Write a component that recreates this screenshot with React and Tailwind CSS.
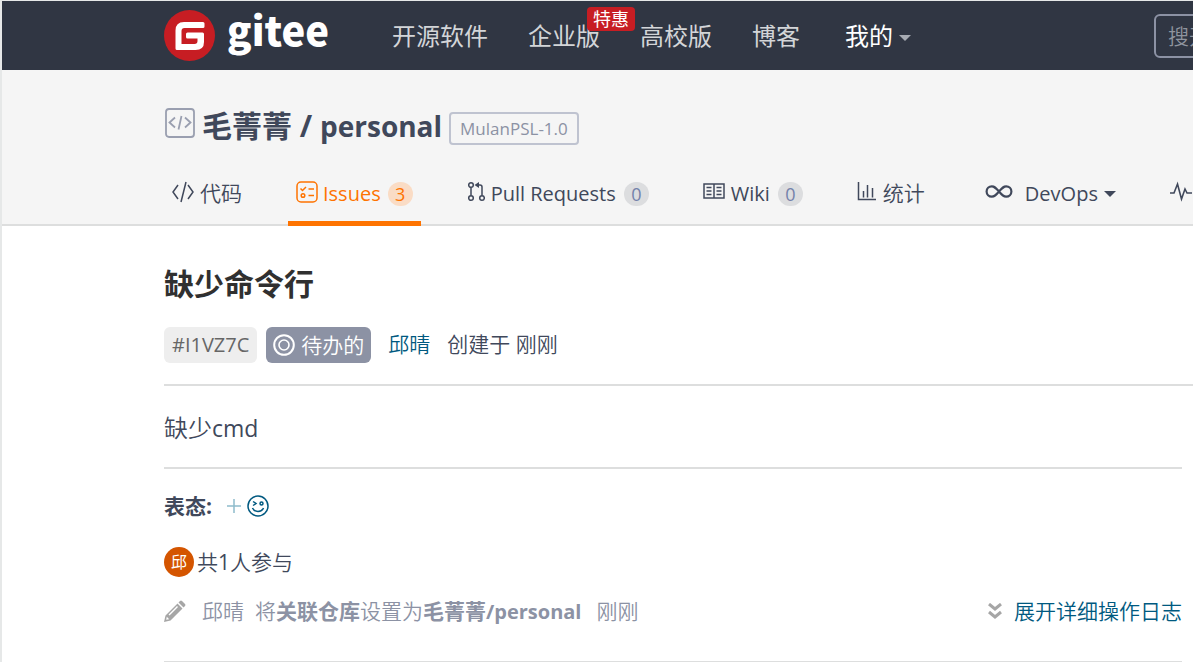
import React from "react";

const CodeIcon = () => (
  <svg className="h-[22px] w-[22px]" viewBox="0 0 22 22" fill="none" stroke="currentColor" strokeWidth="1.5">
    <path d="M6 4L1 11l5 7M16 4l5 7-5 7M14 1L9 21" />
  </svg>
);

const IssueIcon = () => (
  <svg className="h-[22px] w-[22px]" viewBox="0 0 22 22" fill="none" stroke="currentColor" strokeWidth="1.5">
    <rect x="1" y="1" width="20" height="20" rx="4" />
    <path d="M4.5 7.5l2 2 3.5-3.5M12.5 8H18M12.5 14.500H18" />
    <circle cx="7" cy="14.500" r="1.800" />
  </svg>
);

const PullIcon = () => (
  <svg className="h-[22px] w-[18px]" viewBox="0 0 18 22" fill="none" stroke="currentColor" strokeWidth="1.5">
    <circle cx="4" cy="4" r="2.300" />
    <circle cx="4" cy="17" r="2.300" />
    <circle cx="15" cy="17" r="2.300" />
    <path d="M4 6.500v8M15 14.500V6q0-2-2-2H9" />
    <path d="M12 1v6L7.500 4z" fill="currentColor" stroke="none" />
  </svg>
);

const WikiIcon = () => (
  <svg className="h-[22px] w-[22px]" viewBox="0 0 22 22" fill="none" stroke="currentColor" strokeWidth="1.5">
    <path d="M1 3h20v14H1zM11 3v14" />
    <path d="M3.500 6.500h5M3.500 10h5M3.500 13.500h5M13.500 6.500h5M13.500 10h5M13.500 13.500h5" />
  </svg>
);

const StatsIcon = () => (
  <svg className="h-[22px] w-5" viewBox="0 0 20 22" fill="none" stroke="currentColor" strokeWidth="1.5">
    <path d="M1.500 1v17.500H19M6.500 10v6.500M10.500 4v12.500M15.500 7v9.500" />
  </svg>
);

const DevOpsIcon = () => (
  <svg className="mr-[6px] ml-[6px] h-[22px] w-7" viewBox="0 0 28 22" fill="none" stroke="currentColor" strokeWidth="2.2">
    <path d="M14 10.500C10.500 6.500 9.500 5.300 6.800 5.300a5.200 5.200 0 0 0 0 10.400C9.500 15.700 10.500 14.500 14 10.500s4.500-5.200 7.200-5.200a5.200 5.200 0 0 1 0 10.400c-2.700 0-3.700-1.200-7.200-5.200z" />
  </svg>
);

const PulseIcon = () => (
  <svg className="h-[22px] w-[22px]" viewBox="0 0 22 22" fill="none" stroke="currentColor" strokeWidth="1.6">
    <path d="M0 12h4L7.500 3l4 15L15 8l2 4h5" />
  </svg>
);

const Caret = () => (
  <svg className="h-[6px] w-3" viewBox="0 0 12 6" fill="currentColor">
    <path d="M0 0h12L6 6z" />
  </svg>
);

const tabs = [
  { icon: <CodeIcon />, label: "代码" },
  { icon: <IssueIcon />, label: "Issues", count: 3, active: true },
  { icon: <PullIcon />, label: "Pull Requests", count: 0 },
  { icon: <WikiIcon />, label: "Wiki", count: 0 },
  { icon: <StatsIcon />, label: "统计" },
  { icon: <DevOpsIcon />, label: "DevOps", caret: true },
];

const Header = () => (
  <header className="flex h-[69px] items-center bg-[#303643] pl-[162px] text-2xl text-[#d3d5d8]">
    <a href="#" className="flex shrink-0 items-center gap-[11px] text-white">
      <svg className="h-[52px] w-[52px]" viewBox="0 0 52 52">
        <circle cx="25.5" cy="25.5" r="25.5" fill="#c71d23" />
        <path
          d="M39 12H20Q11.500 12 11.500 20.500V38.500a1.500 1.500 0 0 0 1.500 1.500H31.500Q40 40 40 32V24a1.500 1.500 0 0 0-1.500-1.500H23.500a1.500 1.500 0 0 0-1.500 1.500V27a1.500 1.500 0 0 0 1.500 1.500H33.500V31Q33.500 34 30.500 34H17.500V21Q17.500 18 20.500 18H39a1.500 1.500 0 0 0 1.500-1.500V13.500a1.500 1.500 0 0 0-1.500-1.500z"
          fill="#fff"
        />
      </svg>
      <span className="pb-[14px] font-['Noto_Sans_CJK_SC',sans-serif] text-[40px] leading-[52px] font-black">gitee</span>
    </a>
    <nav className="ml-[63px] flex shrink-0 items-center gap-10">
      <a href="#">开源软件</a>
      <a href="#" className="relative">
        企业版
        <span className="absolute -top-[13px] left-[59px] rounded bg-[#c71d23] px-[6px] text-lg leading-6 text-white">
          特惠
        </span>
      </a>
      <a href="#">高校版</a>
      <a href="#">博客</a>
      <button type="button" className="ml-[5px] flex items-center gap-[6px] text-white">
        我的
        <span className="pt-1 text-[#a7abb3]">
          <Caret />
        </span>
      </button>
    </nav>
    <input
      type="search"
      aria-label="搜索"
      placeholder="搜开源"
      className="ml-[243px] h-11 w-60 shrink-0 rounded-md border-2 border-[#8c92a4] bg-transparent px-3 text-[21px] font-[350] placeholder:text-[#8f949e]"
    />
  </header>
);

const ProjectBar = () => (
  <div className="border-b-2 border-[#dddede] bg-[#f5f5f5] pl-[162px] text-[#40485b]">
    <div className="flex items-center pt-9">
      <svg className="h-8 w-8 shrink-0 self-start text-[#9a9fb0]" viewBox="0 0 32 32" fill="none" stroke="currentColor" strokeWidth="1.8">
        <rect x="2" y="3" width="28" height="28" rx="3" />
        <path d="M11 11.500L5.500 16.500l5.500 5M21 11.500l5.500 5-5.500 5M17.500 10l-3 13.500" />
      </svg>
      <h1 className="ml-[6px] text-3xl leading-10 font-bold">
        毛菁菁 / <span className="text-[28px]">personal</span>
      </h1>
      <span className="mt-1 ml-[7px] rounded-sm border-2 border-[#bfc3d0] px-[9px] text-[17px] leading-[29px] text-[#8c92a4]">
        MulanPSL-1.0
      </span>
    </div>
    <nav className="mt-4 -mb-[2px] flex gap-[38px]">
      {tabs.map((tab) => (
        <a
          key={tab.label}
          href="#"
          className={
            tab.active
              ? "flex h-16 shrink-0 items-center gap-[5px] border-b-[5px] border-[#fe7300] px-2 text-[#fe7300]"
              : "flex h-16 shrink-0 items-center gap-[6px] border-b-[5px] border-transparent px-2"
          }
        >
          {tab.icon}
          <span className={/[a-z]/.test(tab.label) ? "pt-[5px] text-xl" : "pt-[5px] font-[350]"}>{tab.label}</span>
          {tab.count !== undefined && (
            <span
              className={
                tab.active
                  ? "mt-[5px] ml-[2px] w-[25px] rounded-full bg-[#fadcc5] text-center text-lg leading-6"
                  : "mt-[5px] ml-[2px] w-[25px] rounded-full bg-[#dcdddf] text-center text-lg leading-6 text-[#7482ab]"
              }
            >
              {tab.count}
            </span>
          )}
          {tab.caret && (
            <span className="pt-1">
              <Caret />
            </span>
          )}
        </a>
      ))}
      <a href="#" aria-label="服务" className="flex h-16 shrink-0 items-center border-b-[5px] border-transparent px-2">
        <PulseIcon />
      </a>
    </nav>
  </div>
);

const Issue = () => (
  <main className="pl-[162px] font-[350] text-[#40485b]">
    <h2 className="pt-9 text-3xl leading-[44px] font-bold text-[#303030]">缺少命令行</h2>
    <div className="flex items-center border-b-2 border-[#dddede] pt-[21px] pb-[21px]">
      <span className="rounded-md bg-[#eee] px-2 text-xl leading-9 font-normal text-[#666]">#I1VZ7C</span>
      <span className="ml-[9px] flex items-center gap-[6px] rounded-md bg-[#8c92a4] px-[7px] leading-9 text-white">
        <svg className="h-[22px] w-[22px]" viewBox="0 0 22 22" fill="none" stroke="currentColor">
          <circle cx="11" cy="11" r="9.800" strokeWidth="2" />
          <circle cx="11" cy="11" r="5" strokeWidth="1.600" />
        </svg>
        待办的
      </span>
      <a href="#" className="ml-[17px] text-[#005980]">邱晴</a>
      <span className="ml-[17px]">创建于 刚刚</span>
    </div>

    <div className="mr-[11px]">
      <p className="border-b-2 border-[#dddede] pt-6 pb-[21px] text-2xl leading-9">
        缺少<span className="text-[23px] font-normal">cmd</span>
      </p>

      <div className="flex items-center pt-[23px] leading-7">
        <span className="font-bold">表态:</span>
        <button type="button" aria-label="添加表态" className="ml-[14px] flex items-center gap-[5px] text-[#005980]">
          <svg className="h-4 w-4" viewBox="0 0 16 16" stroke="#8fbccb" strokeWidth="1.5">
            <path d="M8 1v14M1 8h14" />
          </svg>
          <svg className="h-[22px] w-[22px]" viewBox="0 0 22 22" fill="none" stroke="currentColor" strokeWidth="1.5">
            <circle cx="11" cy="11" r="10" />
            <path d="M6 6.500l3 2-3 2M5.500 13q1.500 3.500 5.500 3.500t5.500-3.500" />
            <circle cx="14.500" cy="8.500" r="1.500" />
          </svg>
        </button>
      </div>

      <div className="flex items-center gap-[3px] pt-[27px]">
        <span className="h-[30px] w-[30px] rounded-full bg-[#d45500] text-center text-base leading-[30px] font-normal text-white">
          邱
        </span>
        <span className="leading-[28px]">
          共<span className="font-normal">1</span>人参与
        </span>
      </div>

      <div className="flex items-center border-b-2 border-[#dddede] pt-[19px] pb-[35px] leading-[30px] text-[#8c92a4]">
        <svg className="h-[22px] w-[22px]" viewBox="0 0 22 22" fill="#a6a6a6">
          <path d="M14.500 2.500L19.500 7.500 21 6q1-1 0-2L18 1q-1-1-2 0z" />
          <path fillRule="evenodd" d="M13.500 3.500L18.500 8.500 6.500 20.500 0 22 1.500 15.500zM13 6L4.500 14.500l1 1L14 7zM2.800 16.800L2.200 19.800 5.200 19.200z" />
        </svg>
        <a href="#" className="ml-4">邱晴</a>
        <span className="ml-[11px]">
          将<b className="font-bold">关联仓库</b>设置为<b className="font-bold">毛菁菁<span className="text-xl">/personal</span></b>
        </span>
        <span className="ml-[15px]">刚刚</span>
        <a href="#" className="ml-auto flex items-center gap-3 text-[#005980]">
          <svg className="h-4 w-[14px]" viewBox="0 0 14 16" fill="none" stroke="#a6a6a6" strokeWidth="3">
            <path d="M1 1l6 5 6-5M1 9l6 5 6-5" />
          </svg>
          展开详细操作日志
        </a>
      </div>
    </div>
  </main>
);

const App = () => {
  return (
    <div className="overflow-x-clip border-t border-l-2 border-[#e6e8e8] bg-white font-['Open_Sans','Noto_Sans_CJK_SC',sans-serif] text-[21px] whitespace-nowrap">
      <Header />
      <ProjectBar />
      <Issue />
    </div>
  );
};

export default App;
